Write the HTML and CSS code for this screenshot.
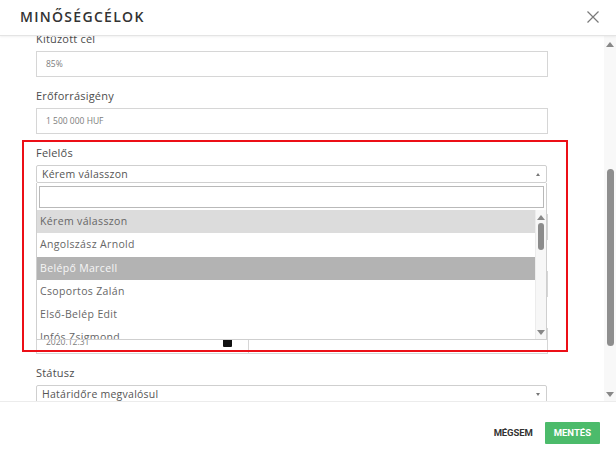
FILE: index.html
```html
<!DOCTYPE html>
<html lang="hu">
<head>
<meta charset="utf-8">
<title>Minőségcélok</title>
<link rel="stylesheet" href="styles.css">
</head>
<body>
<div class="modal">
  <header class="head">
    <h1 class="title">MINŐSÉGCÉLOK</h1>
    <span class="close" aria-label="Bezárás">
      <svg width="12" height="12" viewBox="0 0 12 12"><path d="M0.5 0.5 L11.5 11.5 M11.5 0.5 L0.5 11.5" stroke="#7a7a7a" stroke-width="1.2" fill="none"/></svg>
    </span>
  </header>

  <div class="body">
    <div class="scroll">
      <div class="content">
        <div class="group">
          <div class="label">Kitűzött cél</div>
          <div class="input">85%</div>
        </div>
        <div class="group">
          <div class="label">Erőforrásigény</div>
          <div class="input">1 500 000 HUF</div>
        </div>
        <div class="group felelos">
          <div class="label">Felelős</div>
          <div class="select">Kérem válasszon<span class="caret up"></span></div>
          <div class="dropdown">
            <div class="search"><div class="search-box"></div></div>
            <div class="list">
              <div class="items">
                <div class="item hover">Kérem válasszon</div>
                <div class="item">Angolszász Arnold</div>
                <div class="item selected">Belépő Marcell</div>
                <div class="item">Csoportos Zalán</div>
                <div class="item">Első-Belép Edit</div>
                <div class="item">Infós Zsigmond</div>
              </div>
              <div class="mini-bar">
                <span class="arrow up-a"></span>
                <span class="mini-thumb"></span>
                <span class="arrow down-a"></span>
              </div>
            </div>
          </div>
        </div>
        <div class="group">
          <div class="label">Mérőszám</div>
          <div class="input">%</div>
        </div>
        <div class="group">
          <div class="label">Megjegyzés</div>
          <div class="input"></div>
        </div>
        <div class="group">
          <div class="label">Határidő</div>
          <div class="row">
            <div class="input date">2020.12.31
              <svg class="cal" width="9" height="9" viewBox="0 0 9 9"><rect x="0" y="1" width="9" height="8" rx="1" fill="#111"/></svg>
            </div>
            <div class="input date2"></div>
          </div>
        </div>
        <div class="group">
          <div class="label">Státusz</div>
          <div class="select">Határidőre megvalósul<span class="caret down"></span></div>
        </div>
        <div class="group">
          <div class="label">Kapcsolódó folyamat</div>
          <div class="input"></div>
        </div>
      </div>
      <div class="highlight"></div>
    </div>
    <div class="vbar">
      <span class="arrow up-a"></span>
      <span class="vthumb"></span>
      <span class="arrow down-a"></span>
    </div>
  </div>

  <footer class="foot">
    <span class="btn-text">MÉGSEM</span>
    <span class="btn-save">MENTÉS</span>
  </footer>
</div>
</body>
</html>
```

FILE: styles.css
```css
* { box-sizing: border-box; }
html, body { margin: 0; padding: 0; }
body {
  width: 616px;
  height: 453px;
  overflow: hidden;
  background: #fff;
  font-family: "Open Sans", "DejaVu Sans", sans-serif;
}
.modal {
  width: 616px;
  height: 453px;
  display: flex;
  flex-direction: column;
  background: #fff;
}
.head {
  height: 36px;
  flex: none;
  display: flex;
  align-items: center;
  justify-content: space-between;
  padding: 0 17px 2px 20px;
  border-bottom: 1px solid #e4e4e4;
  box-shadow: 0 1px 2px rgba(0,0,0,0.06);
  position: relative;
  z-index: 2;
}
.title {
  margin: 0;
  font-size: 14px;
  font-weight: 600;
  letter-spacing: 1.3px;
  color: #333;
}
.close { display: flex; }

.body {
  flex: 1;
  display: flex;
  min-height: 0;
}
.scroll {
  flex: 1;
  overflow: hidden;
  position: relative;
}
.content {
  margin-top: -4px;
  padding: 0 56px 0 36px;
}
.group + .group { margin-top: 12px; }
.label {
  font-size: 11px;
  line-height: 14px;
  height: 14px;
  color: #4d4d4d;
  margin-bottom: 5px;
  letter-spacing: 0.2px;
}
.input {
  height: 26px;
  border: 1px solid #d6d6d6;
  padding-left: 9px;
  font-size: 8.5px;
  line-height: 24px;
  color: #7d7d7d;
  background: #fff;
}
.select {
  height: 18px;
  margin-right: 1px;
  border: 1px solid #cfcfcf;
  border-radius: 2px;
  padding-left: 5px;
  font-size: 10.5px;
  line-height: 16px;
  color: #555;
  letter-spacing: 0.25px;
  position: relative;
}
.caret {
  position: absolute;
  right: 6px;
  top: 7px;
  width: 0;
  height: 0;
  border-left: 2.5px solid transparent;
  border-right: 2.5px solid transparent;
}
.caret.up { border-bottom: 3px solid #777; }
.caret.down { border-top: 3px solid #777; }

.felelos { position: relative; }
.dropdown {
  position: absolute;
  left: 0;
  right: 1px;
  top: 37px;
  height: 157px;
  background: #fff;
  border: 1px solid #cfcfcf;
  border-top: none;
  z-index: 3;
  display: flex;
  flex-direction: column;
}
.search { padding: 3px 2px 2px 2px; }
.search-box {
  height: 22px;
  border: 1px solid #b9b9b9;
  background: #fff;
}
.list {
  flex: 1;
  display: flex;
  min-height: 0;
  overflow: hidden;
}
.items { flex: 1; overflow: hidden; }
.item {
  height: 23.3px;
  line-height: 23px;
  padding-left: 3px;
  font-size: 10.5px;
  color: #666;
  letter-spacing: 0.35px;
}
.item.hover { background: #dcdcdc; }
.item.selected { background: #b3b3b3; color: #f6f6f6; }
.mini-bar {
  width: 11px;
  flex: none;
  background: #f7f7f7;
  border-left: 1px solid #ececec;
  display: flex;
  flex-direction: column;
  align-items: center;
  padding: 5px 0 4px;
}
.mini-thumb {
  width: 6px;
  height: 27px;
  border-radius: 3px;
  background: #8c8c8c;
  margin-top: 3px;
}
.mini-bar .down-a { margin-top: auto; }
.arrow {
  width: 0;
  height: 0;
  border-left: 4px solid transparent;
  border-right: 4px solid transparent;
}
.arrow.up-a { border-bottom: 5px solid #888; }
.arrow.down-a { border-top: 5px solid #888; }

.row { display: flex; }
.date { width: 213px; flex: none; position: relative; padding-top: 1px; }
.date .cal { position: absolute; left: 186px; top: 9px; }
.date2 { flex: 1; border-left: none; }

.highlight {
  position: absolute;
  left: 22px;
  top: 104px;
  width: 546px;
  height: 212px;
  border: 2.5px solid #ec0f17;
  z-index: 4;
  pointer-events: none;
}

.vbar {
  width: 12px;
  flex: none;
  background: #f8f8f8;
  display: flex;
  flex-direction: column;
  align-items: center;
  padding: 6px 0 4px;
}
.vthumb {
  width: 7px;
  height: 177px;
  border-radius: 4px;
  background: #8e8e8e;
  margin-top: 122px;
}
.vbar .down-a { margin-top: auto; }

.foot {
  height: 52px;
  flex: none;
  border-top: 1px solid #ececec;
  display: flex;
  justify-content: flex-end;
  align-items: flex-start;
  padding: 20px 16px 0 0;
  gap: 12px;
  position: relative;
  z-index: 2;
  background: #fff;
}
.btn-text {
  font-family: "Roboto", "Open Sans", sans-serif;
  font-weight: 700;
  font-size: 9.5px;
  line-height: 22px;
  color: #333;
  letter-spacing: -0.1px;
}
.btn-save {
  height: 22px;
  line-height: 22px;
  padding: 0 9px;
  background: #4cbb6b;
  color: #fff;
  font-family: "Roboto", "Open Sans", sans-serif;
  font-weight: 700;
  font-size: 9.5px;
  border-radius: 1px;
}
```
